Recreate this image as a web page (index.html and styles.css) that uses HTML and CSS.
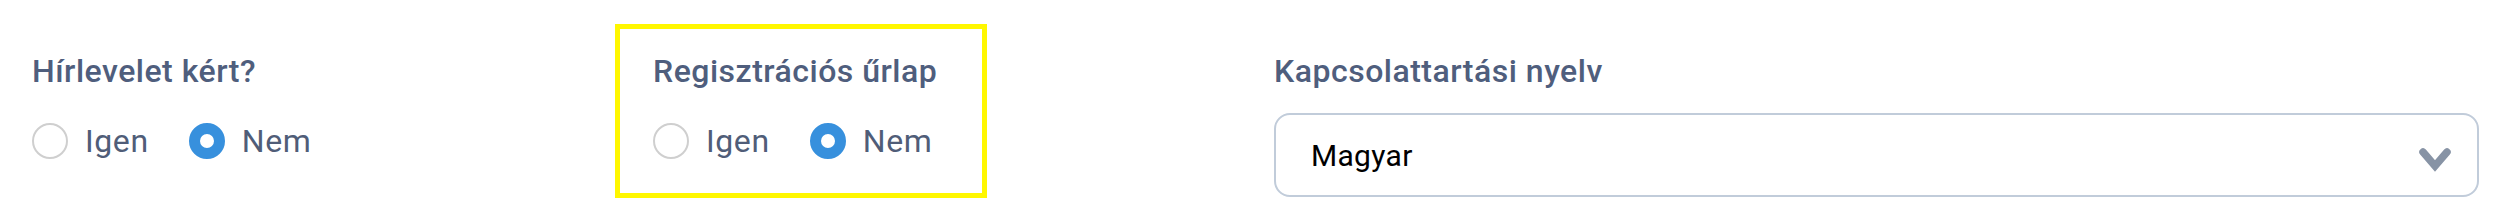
FILE: index.html
```html
<!DOCTYPE html>
<html lang="hu">
<head>
    <meta charset="UTF-8">
    <meta name="viewport" content="width=device-width, initial-scale=1.0">
    <title>Kapcsolati beállítások</title>
    <link rel="stylesheet" href="styles.css">
</head>
<body>
    <div class="form-row">
        <!-- Hírlevél -->
        <div class="field">
            <div class="field-label">Hírlevelet kért?</div>
            <div class="radio-group">
                <label class="radio-option"><span class="radio"></span>Igen</label>
                <label class="radio-option"><span class="radio checked"></span>Nem</label>
            </div>
        </div>

        <!-- Regisztrációs űrlap (kiemelve) -->
        <div class="field-wrap">
            <div class="field highlighted">
                <div class="field-label">Regisztrációs űrlap</div>
                <div class="radio-group">
                    <label class="radio-option"><span class="radio"></span>Igen</label>
                    <label class="radio-option"><span class="radio checked"></span>Nem</label>
                </div>
            </div>
        </div>

        <!-- Nyelv -->
        <div class="field">
            <div class="field-label">Kapcsolattartási nyelv</div>
            <div class="select-wrap">
                <select class="select">
                    <option>Magyar</option>
                    <option>English</option>
                </select>
                <svg class="chevron" width="32" height="24" viewBox="0 0 32 24">
                    <polyline points="4,4 16,18 28,4" fill="none" stroke="#8793a5" stroke-width="7.5" stroke-linecap="round" stroke-linejoin="miter"/>
                </svg>
            </div>
        </div>
    </div>
</body>
</html>
```

FILE: styles.css
```css
* {
    margin: 0;
    padding: 0;
    box-sizing: border-box;
}

body {
    font-family: Roboto, "Noto Sans", Arial, sans-serif;
    background-color: #fff;
    color: #4f5e7d;
}

.form-row {
    display: grid;
    grid-template-columns: 583px 659px 1fr;
    padding: 24px 19px 0 32px;
}

.field {
    padding-top: 27px;
}

.field.highlighted {
    width: 372px;
    border: 5px solid #fff700;
    padding: 22px 20px 32px 33px;
}

.field-label {
    font-size: 32px;
    line-height: 40px;
    font-weight: 500;
    letter-spacing: 0.5px;
    color: #4f5e7d;
}

.radio-group {
    display: flex;
    align-items: center;
    gap: 40px;
    margin-top: 30px;
}

.radio-option {
    display: flex;
    align-items: center;
    gap: 17px;
    font-size: 32px;
    line-height: 40px;
    letter-spacing: 0.6px;
    color: #505d78;
    cursor: pointer;
}

.radio {
    width: 36px;
    height: 36px;
    border-radius: 50%;
    border: 2px solid #cfcfcf;
    background-color: #fff;
}

.radio.checked {
    border: 11px solid #3790dd;
}

.select-wrap {
    position: relative;
    margin-top: 22px;
}

.select {
    appearance: none;
    -webkit-appearance: none;
    width: 100%;
    height: 84px;
    padding: 0 80px 0 35px;
    border: 2px solid #c1ccda;
    border-radius: 16px;
    background-color: #fff;
    font-family: Roboto, "Noto Sans", Arial, sans-serif;
    font-size: 30px;
    letter-spacing: 0.3px;
    color: #000;
    outline: none;
}

.chevron {
    position: absolute;
    right: 28px;
    top: 35px;
    pointer-events: none;
}
```
